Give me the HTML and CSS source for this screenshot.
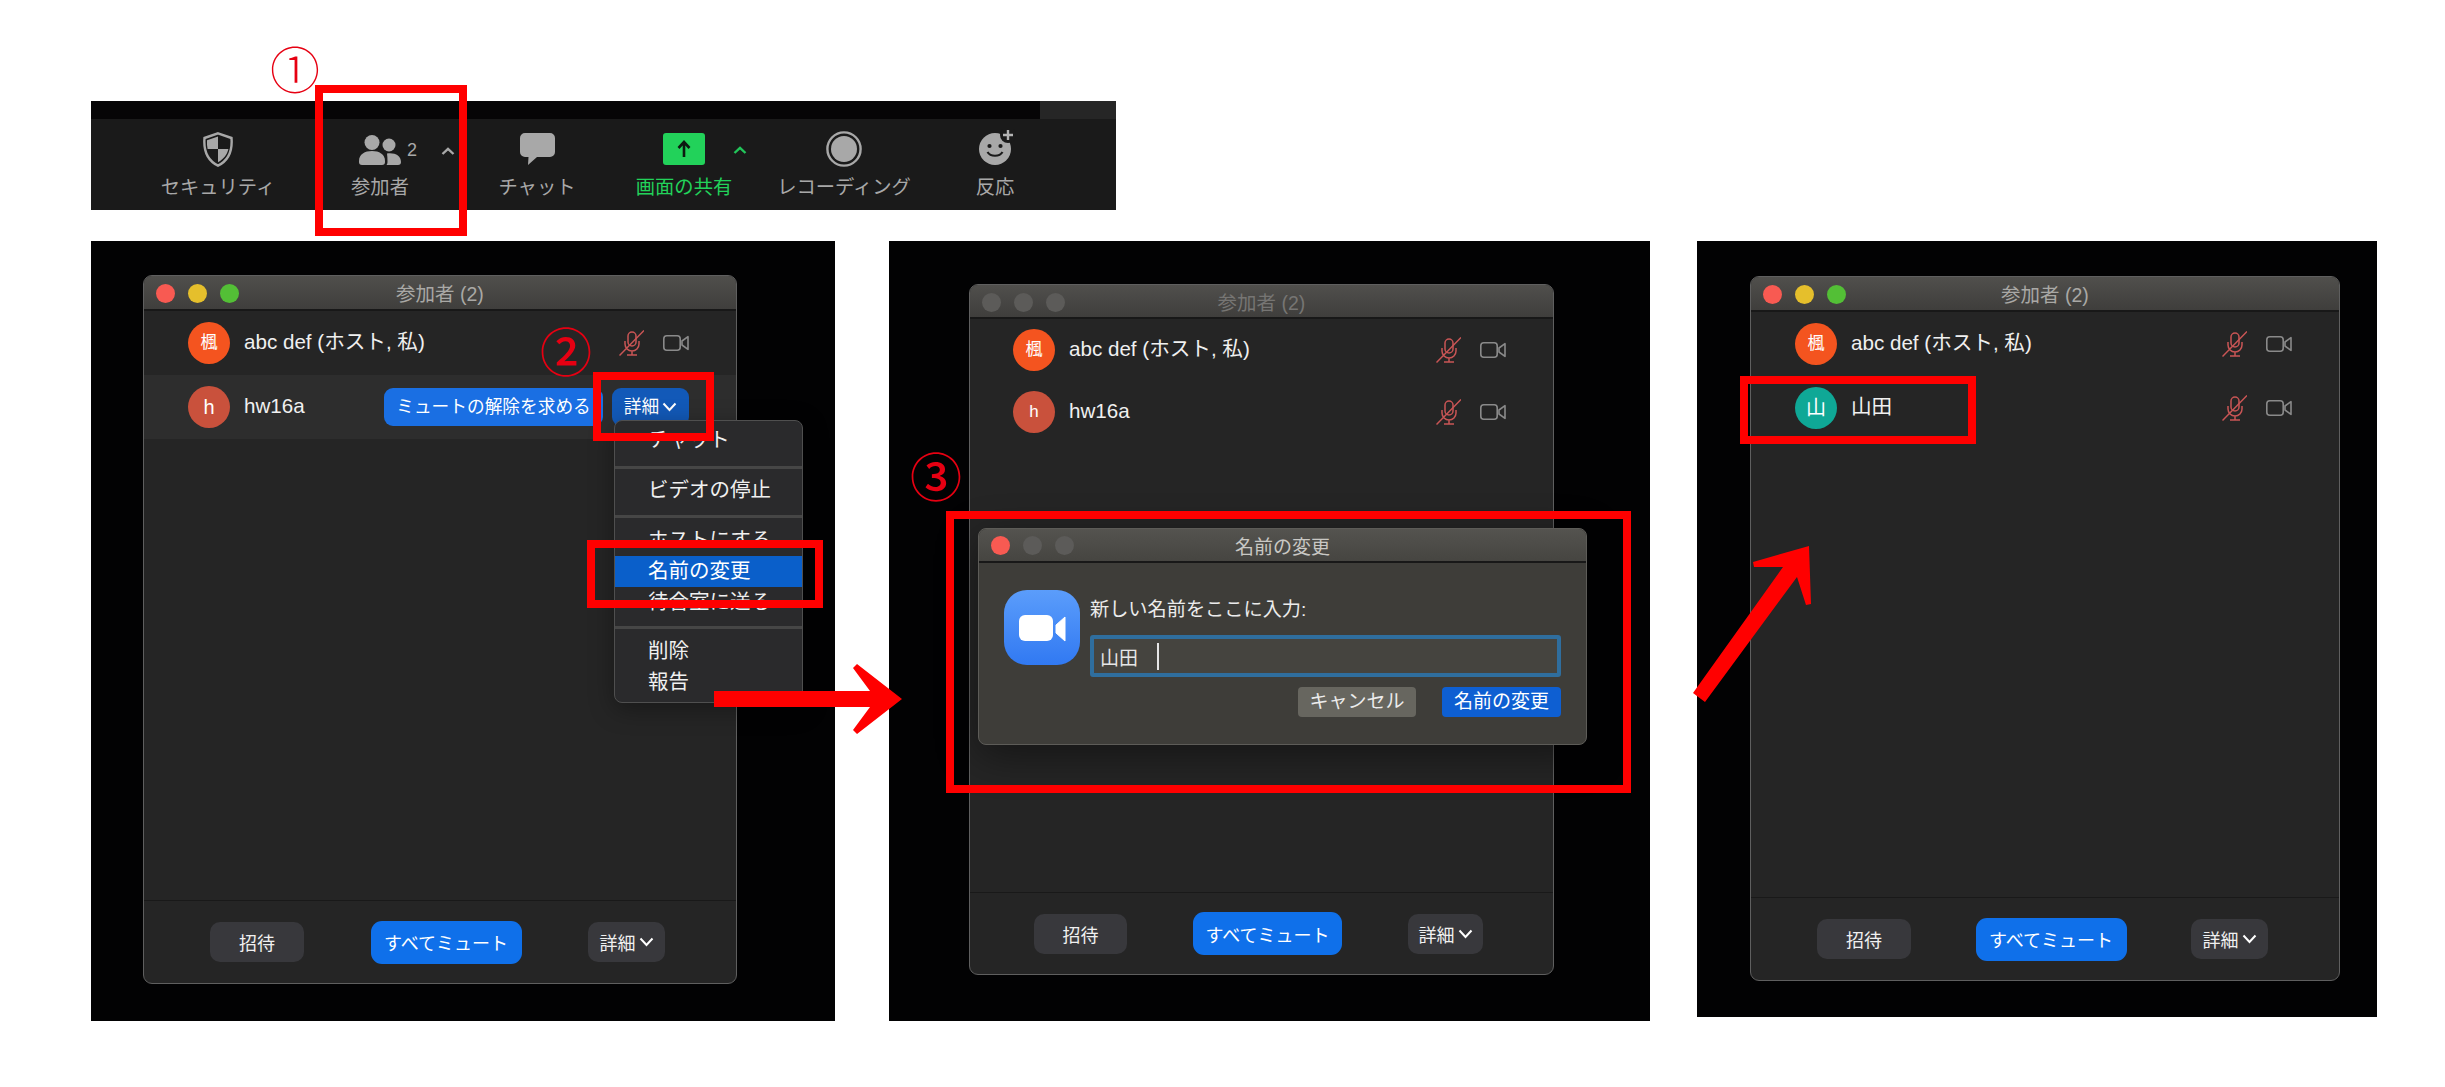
FILE: index.html
```html
<!DOCTYPE html>
<html lang="ja">
<head>
    <meta charset="UTF-8">
    <meta name="viewport" content="width=device-width, initial-scale=1.0">
    <title>名前の変更手順</title>
    <link rel="stylesheet" href="styles.css">
</head>
<body>
    <svg class="icon-defs" aria-hidden="true">
        <symbol id="mic-off" viewBox="0 0 25 26">
            <rect x="9" y="2" width="8" height="14" rx="4" fill="none" stroke="currentColor" stroke-width="1.5"/>
            <path d="M6 11v3a7 7 0 0 0 14 0v-3M13 21v4M8 25h10M.5 25.5 25 .5" fill="none" stroke="currentColor" stroke-width="1.5"/>
        </symbol>
        <symbol id="camera" viewBox="0 0 26 16">
            <rect x=".8" y=".8" width="16.4" height="14.4" rx="3" fill="none" stroke="currentColor" stroke-width="1.6"/>
            <path d="M19 6 25 1.6v12.8L19 10z" fill="none" stroke="currentColor" stroke-width="1.6" stroke-linejoin="round"/>
        </symbol>
        <symbol id="chevron" viewBox="0 0 15 10">
            <path d="M1.5 1.5 7.5 8l6-6.5" fill="none" stroke="currentColor" stroke-width="2"/>
        </symbol>
        <symbol id="caret" viewBox="0 0 14 8">
            <path d="M1.5 7 7 1.8 12.5 7" fill="none" stroke="currentColor" stroke-width="2.4"/>
        </symbol>
    </svg>

    <header class="toolbar">
        <div class="toolbar-strip"><div class="strip-patch"></div></div>
        <div class="toolbar-items">
            <div class="tool tool-security">
                <svg class="tool-icon" width="32" height="35" viewBox="0 0 32 35">
                    <path d="M16 1.3 29.500 6c1 12-2 22-13.500 27.700C4.500 28 1.500 18 2.500 6z" fill="none" stroke="#a8a8a8" stroke-width="2.4"/>
                    <path d="M16 4.500 5 8.200c-.2 3 0 6 .6 8.800H16zM16 17h10.400c-1.300 5.500-4.500 10-10.400 13.200z" fill="#a8a8a8"/>
                </svg>
                <span class="tool-label">セキュリティ</span>
            </div>
            <div class="tool tool-people">
                <svg class="tool-icon" width="42" height="30" viewBox="0 0 42 30">
                    <circle cx="13" cy="7.5" r="7.5" fill="#a8a8a8"/>
                    <circle cx="30" cy="10" r="6.5" fill="#a8a8a8"/>
                    <path d="M0 26c0-7 6-10 13-10s13 3 13 10v1a3 3 0 0 1-3 3H3a3 3 0 0 1-3-3z" fill="#a8a8a8"/>
                    <path d="M28 18.500c8-1 14 2 14 8.500a3 3 0 0 1-3 3H27.500c.8-.8 1-2 1-3.500 0-3-.2-5.500-.5-8z" fill="#a8a8a8"/>
                </svg>
                <span class="tool-count">2</span>
                <svg class="tool-caret caret-people"><use href="#caret"/></svg>
                <span class="tool-label">参加者</span>
            </div>
            <div class="tool tool-chat">
                <svg class="tool-icon" width="35" height="32" viewBox="0 0 35 32">
                    <path d="M5 0h25a5 5 0 0 1 5 5v14a5 5 0 0 1-5 5H17l-9 8 .5-8H5a5 5 0 0 1-5-5V5a5 5 0 0 1 5-5z" fill="#a8a8a8"/>
                </svg>
                <span class="tool-label">チャット</span>
            </div>
            <div class="tool tool-share">
                <svg class="tool-icon" width="42" height="32" viewBox="0 0 42 32">
                    <rect width="42" height="32" rx="3" fill="#22d25a"/>
                    <path d="M21 24V10M15.500 15 21 9l5.500 6" fill="none" stroke="#0d1a10" stroke-width="2.6"/>
                </svg>
                <svg class="tool-caret caret-share"><use href="#caret"/></svg>
                <span class="tool-label label-green">画面の共有</span>
            </div>
            <div class="tool tool-record">
                <svg class="tool-icon" width="36" height="36" viewBox="0 0 36 36">
                    <circle cx="18" cy="18" r="16.6" fill="none" stroke="#a8a8a8" stroke-width="2.4"/>
                    <circle cx="18" cy="18" r="13" fill="#a8a8a8"/>
                </svg>
                <span class="tool-label">レコーディング</span>
            </div>
            <div class="tool tool-reaction">
                <svg class="tool-icon icon-reaction" width="44" height="36" viewBox="0 0 44 36">
                    <circle cx="22" cy="20" r="16" fill="#a8a8a8"/>
                    <circle cx="35" cy="6" r="8" fill="#1a1a1a"/>
                    <path d="M35 1v10M30 6h10" stroke="#b4b4b4" stroke-width="2.4"/>
                    <circle cx="16.500" cy="17" r="2.1" fill="#1a1a1a"/>
                    <circle cx="27.500" cy="17" r="2.1" fill="#1a1a1a"/>
                    <path d="M14.500 23c3 5 12 5 15 0" fill="none" stroke="#1a1a1a" stroke-width="2.2"/>
                </svg>
                <span class="tool-label">反応</span>
            </div>
        </div>
    </header>

    <main class="panels">
        <section class="panel panel-a">
            <div class="win win-a">
                <div class="titlebar">
                    <div class="dots"><i class="dot red"></i><i class="dot yellow"></i><i class="dot green"></i></div>
                    <span class="win-title">参加者 (2)</span>
                </div>
                <div class="rows">
                    <div class="row">
                        <span class="avatar av-orange">楓</span>
                        <span class="name">abc def (ホスト, 私)</span>
                        <span class="row-icons">
                            <svg class="mic"><use href="#mic-off"/></svg>
                            <svg class="cam"><use href="#camera"/></svg>
                        </span>
                    </div>
                    <div class="row row-hover">
                        <span class="avatar av-brick">h</span>
                        <span class="name">hw16a</span>
                        <span class="row-actions">
                            <span class="btn-ask">ミュートの解除を求める</span>
                            <span class="btn-more">詳細<svg class="chev"><use href="#chevron"/></svg></span>
                        </span>
                    </div>
                </div>
                <div class="win-foot">
                    <span class="foot-btn foot-invite">招待</span>
                    <span class="foot-btn foot-mute">すべてミュート</span>
                    <span class="foot-btn foot-more">詳細<svg class="chev"><use href="#chevron"/></svg></span>
                </div>
                <div class="menu">
                    <div class="menu-item">チャット</div>
                    <div class="menu-sep sep-one"></div>
                    <div class="menu-item">ビデオの停止</div>
                    <div class="menu-sep sep-two"></div>
                    <div class="menu-item">ホストにする</div>
                    <div class="menu-item menu-active">名前の変更</div>
                    <div class="menu-item">待合室に送る</div>
                    <div class="menu-sep sep-three"></div>
                    <div class="menu-item">削除</div>
                    <div class="menu-item">報告</div>
                </div>
            </div>
        </section>

        <section class="panel panel-b">
            <div class="win win-b">
                <div class="titlebar">
                    <div class="dots"><i class="dot grey"></i><i class="dot grey"></i><i class="dot grey"></i></div>
                    <span class="win-title">参加者 (2)</span>
                </div>
                <div class="rows">
                    <div class="row">
                        <span class="avatar av-orange">楓</span>
                        <span class="name">abc def (ホスト, 私)</span>
                        <span class="row-icons">
                            <svg class="mic"><use href="#mic-off"/></svg>
                            <svg class="cam"><use href="#camera"/></svg>
                        </span>
                    </div>
                    <div class="row">
                        <span class="avatar av-brick">h</span>
                        <span class="name">hw16a</span>
                        <span class="row-icons">
                            <svg class="mic"><use href="#mic-off"/></svg>
                            <svg class="cam"><use href="#camera"/></svg>
                        </span>
                    </div>
                </div>
                <div class="win-foot">
                    <span class="foot-btn foot-invite">招待</span>
                    <span class="foot-btn foot-mute">すべてミュート</span>
                    <span class="foot-btn foot-more">詳細<svg class="chev"><use href="#chevron"/></svg></span>
                </div>
                <div class="dialog">
                    <div class="titlebar dialog-bar">
                        <div class="dots"><i class="dot red"></i><i class="dot grey"></i><i class="dot grey"></i></div>
                        <span class="win-title">名前の変更</span>
                    </div>
                    <div class="dialog-body">
                        <svg class="zoom-logo" width="76" height="75" viewBox="0 0 76 75">
                            <defs>
                                <linearGradient id="zoom-blue" x1="0" y1="0" x2="0" y2="1">
                                    <stop offset="0" stop-color="#5b9dfb"/>
                                    <stop offset="1" stop-color="#3179f2"/>
                                </linearGradient>
                            </defs>
                            <rect width="76" height="75" rx="23" fill="url(#zoom-blue)"/>
                            <rect x="15" y="25" width="34" height="26" rx="6" fill="#fff"/>
                            <path d="M52 35l9-8v24l-9-8z" fill="#fff" stroke="#fff" stroke-linejoin="round"/>
                        </svg>
                        <div class="dialog-form">
                            <div class="dialog-label">新しい名前をここに入力:</div>
                            <div class="name-input"><span>山田</span><i class="caret-bar"></i></div>
                            <div class="dialog-btns">
                                <span class="dlg-btn dlg-cancel">キャンセル</span>
                                <span class="dlg-btn dlg-ok">名前の変更</span>
                            </div>
                        </div>
                    </div>
                </div>
            </div>
        </section>

        <section class="panel panel-c">
            <div class="win win-c">
                <div class="titlebar">
                    <div class="dots"><i class="dot red"></i><i class="dot yellow"></i><i class="dot green"></i></div>
                    <span class="win-title">参加者 (2)</span>
                </div>
                <div class="rows">
                    <div class="row">
                        <span class="avatar av-orange">楓</span>
                        <span class="name">abc def (ホスト, 私)</span>
                        <span class="row-icons">
                            <svg class="mic"><use href="#mic-off"/></svg>
                            <svg class="cam"><use href="#camera"/></svg>
                        </span>
                    </div>
                    <div class="row">
                        <span class="avatar av-teal">山</span>
                        <span class="name">山田</span>
                        <span class="row-icons">
                            <svg class="mic"><use href="#mic-off"/></svg>
                            <svg class="cam"><use href="#camera"/></svg>
                        </span>
                    </div>
                </div>
                <div class="win-foot">
                    <span class="foot-btn foot-invite">招待</span>
                    <span class="foot-btn foot-mute">すべてミュート</span>
                    <span class="foot-btn foot-more">詳細<svg class="chev"><use href="#chevron"/></svg></span>
                </div>
            </div>
        </section>
    </main>

    <!-- red annotations drawn on top of the screenshots -->
    <div class="box box-people"></div>
    <div class="box box-more"></div>
    <div class="box box-rename"></div>
    <div class="box box-dialog"></div>
    <div class="box box-result"></div>
    <span class="num num-one">①</span>
    <span class="num num-two">②</span>
    <span class="num num-three">③</span>
    <svg class="arrows" width="2445" height="1087" viewBox="0 0 2445 1087">
        <polygon points="714,691 870,691 853,668 857,664 902,699 857,734 853,730 870,707 714,707" fill="#f00"/>
        <polygon points="1693,693 1783,567 1754,567 1753,562 1809,546 1811,604 1806,605 1797,577 1705,702" fill="#f00"/>
    </svg>
</body>
</html>
```

FILE: styles.css
```css
* {
    box-sizing: border-box;
}
html, body {
    height: 1087px;
    overflow: hidden;
}
body {
    margin: 0;
    position: relative;
    background-color: #ffffff;
    font-family: "Liberation Sans", "Noto Sans CJK JP", sans-serif;
    color: #e8e8e8;
}
.icon-defs {
    position: absolute;
    width: 0;
    height: 0;
}

/* toolbar */
.toolbar {
    margin: 101px 0 0 91px;
    width: 1025px;
    height: 109px;
    background-color: #1a1a1a;
}
.toolbar-strip {
    height: 18px;
    background-color: #060506;
    display: flex;
    justify-content: flex-end;
}
.strip-patch {
    width: 76px;
    background-color: #262626;
}
.toolbar-items {
    display: flex;
    padding-left: 49px;
    height: 91px;
}
.tool {
    position: relative;
    display: flex;
    flex-direction: column;
    align-items: center;
}
.tool-security { width: 156px; }
.tool-people { width: 168px; }
.tool-chat { width: 146px; }
.tool-share { width: 148px; }
.tool-record { width: 172px; }
.tool-reaction { width: 130px; }
.tool-icon {
    position: absolute;
    top: 14px;
}
.tool-security .tool-icon { top: 13px; }
.tool-people .tool-icon { top: 16px; }
.tool-record .tool-icon { top: 12px; }
.tool-reaction .tool-icon { top: 10px; left: 43px; }
.tool-label {
    position: absolute;
    top: 56px;
    line-height: 26px;
    font-size: 19.3px;
    color: #a8a8a8;
    white-space: nowrap;
}
.label-green {
    color: #22d25a;
}
.tool-count {
    position: absolute;
    left: 111px;
    top: 19px;
    font-size: 18px;
    line-height: 24px;
    color: #a8a8a8;
}
.tool-caret {
    position: absolute;
    width: 14px;
    height: 8px;
}
.caret-people {
    left: 145px;
    top: 28px;
    color: #a8a8a8;
}
.caret-share {
    left: 123px;
    top: 27px;
    color: #22c55a;
}

/* black screenshots */
.panels {
    display: flex;
    margin: 31px 0 0 91px;
}
.panel {
    height: 780px;
    background-color: #020203;
}
.panel-a {
    width: 744px;
    padding: 34px 0 0 52px;
}
.panel-b {
    width: 761px;
    margin-left: 54px;
    padding: 43px 0 0 80px;
}
.panel-c {
    width: 680px;
    height: 776px;
    margin-left: 47px;
    padding: 35px 0 0 53px;
}

/* participants window */
.win {
    position: relative;
    display: flex;
    flex-direction: column;
    background-color: #252525;
    border: 1px solid #5f5f5f;
    border-radius: 9px;
}
.win-a { width: 594px; height: 709px; }
.win-b { width: 585px; height: 691px; }
.win-c { width: 590px; height: 705px; }
.titlebar {
    position: relative;
    flex: none;
    height: 35px;
    display: flex;
    align-items: center;
    justify-content: center;
    background: linear-gradient(#504f4c, #3f3e3c);
    border-bottom: 2px solid #181818;
    border-radius: 8px 8px 0 0;
}
.win-b > .titlebar {
    height: 34px;
}
.dots {
    position: absolute;
    left: 12px;
    top: 8px;
    display: flex;
    gap: 13px;
}
.dot {
    width: 19px;
    height: 19px;
    border-radius: 50%;
}
.dot.red { background-color: #f85a52; }
.dot.yellow { background-color: #e5bf2c; }
.dot.green { background-color: #53bf36; }
.dot.grey { background-color: #5c5b59; }
.win-title {
    font-size: 19.5px;
    color: #a9a8a5;
}
.win-b > .titlebar .win-title {
    color: #767573;
}
.rows {
    flex: 1;
}
.row {
    display: flex;
    align-items: center;
    height: 64px;
    padding: 0 47px 0 44px;
}
.win-b .row {
    height: 62px;
    padding-left: 43px;
}
.row-hover {
    background-color: #2d2d2d;
}
.avatar {
    flex: none;
    width: 42px;
    height: 42px;
    margin-right: 14px;
    border-radius: 50%;
    color: #ffffff;
    font-size: 17px;
    line-height: 42px;
    text-align: center;
}
.row-hover .avatar {
    font-size: 20px;
}
.av-orange { background-color: #f4541f; }
.av-brick { background-color: #c9513c; }
.av-teal { background-color: #0fa896; font-size: 20px; }
.name {
    height: 24px;
    margin-bottom: 2px;
    font-size: 20.6px;
    line-height: 24px;
    color: #f0f0f0;
    white-space: nowrap;
}
.row-icons {
    display: flex;
    align-items: center;
    gap: 19px;
    margin-left: auto;
}
.mic {
    width: 25px;
    height: 26px;
    color: #c95555;
}
.cam {
    width: 26px;
    height: 16px;
    color: #8a8a8a;
}
.row-actions {
    display: flex;
    gap: 9px;
    margin-left: auto;
}
.btn-ask, .btn-more {
    height: 38px;
    border-radius: 9px;
    background-color: #1a6fe3;
    color: #ffffff;
    font-size: 17.7px;
    line-height: 38px;
    text-align: center;
}
.btn-ask {
    width: 219px;
}
.btn-more {
    width: 77px;
    display: flex;
    align-items: center;
    justify-content: center;
    gap: 3px;
    background-color: #1259b8;
}
.chev {
    width: 15px;
    height: 10px;
    color: #ffffff;
}
.win-foot {
    flex: none;
    height: 83px;
    display: flex;
    align-items: center;
    justify-content: space-between;
    padding: 0 71px 0 66px;
    border-top: 1px solid #191919;
}
.win-b .win-foot {
    height: 82px;
    padding: 0 70px 0 64px;
}
.foot-btn {
    height: 40px;
    display: flex;
    align-items: center;
    justify-content: center;
    gap: 3px;
    border-radius: 10px;
    background-color: #38383c;
    color: #f0f0f0;
    font-size: 18px;
}
.foot-invite { width: 94px; }
.foot-mute {
    width: 151px;
    height: 43px;
    border-radius: 11px;
    background-color: #0f70ea;
    color: #ffffff;
}
.foot-more { width: 77px; }
.win-b .foot-invite { width: 93px; }
.win-b .foot-mute { width: 149px; }
.win-b .foot-more { width: 75px; }

/* dropdown over the window */
.menu {
    position: absolute;
    left: 470px;
    top: 144px;
    width: 189px;
    height: 283px;
    padding-top: 4px;
    background-color: #2a2a2c;
    border: 1px solid #4f4f4f;
    border-radius: 8px;
    box-shadow: 0 6px 24px rgba(0, 0, 0, 0.35);
}
.menu-item {
    height: 31px;
    padding-left: 33px;
    font-size: 20.5px;
    line-height: 30px;
    color: #f0f0f0;
    white-space: nowrap;
}
.menu-active {
    background-color: #0a5fca;
    color: #ffffff;
}
.menu-sep {
    height: 3px;
    background-color: #464646;
}
.sep-one { margin: 10px 0 6px; }
.sep-two { margin: 9px 0 7px; }
.sep-three { margin: 8px 0 7px; }

/* rename dialog */
.dialog {
    position: absolute;
    left: 8px;
    top: 243px;
    width: 609px;
    height: 217px;
    background-color: #3e3d39;
    border: 1px solid #5d5c58;
    border-radius: 8px;
    box-shadow: 0 10px 40px rgba(0, 0, 0, 0.45);
}
.dialog-bar {
    height: 34px;
    background: linear-gradient(#54534f, #464541);
}
.dialog .dots {
    left: 12px;
    top: 7px;
}
.dialog-bar .win-title {
    color: #c9c8c4;
    font-size: 19px;
}
.dialog-body {
    display: flex;
    align-items: flex-start;
    gap: 10px;
    padding: 27px 0 0 25px;
}
.zoom-logo {
    flex: none;
}
.dialog-form {
    width: 471px;
    margin-top: 5px;
}
.dialog-label {
    height: 30px;
    font-size: 19.2px;
    line-height: 30px;
    color: #ececec;
}
.name-input {
    display: flex;
    align-items: center;
    height: 42px;
    margin-top: 10px;
    padding-left: 6px;
    background-color: #45443f;
    border: 4px solid #2f6e9e;
    border-radius: 3px;
    font-size: 19px;
    color: #e6e6e6;
}
.caret-bar {
    width: 2px;
    height: 27px;
    margin-left: 19px;
    background-color: #e6e6e6;
}
.dialog-btns {
    display: flex;
    justify-content: flex-end;
    gap: 26px;
    margin-top: 10px;
}
.dlg-btn {
    width: 119px;
    height: 30px;
    border-radius: 4px;
    font-size: 19px;
    line-height: 30px;
    text-align: center;
    color: #ffffff;
}
.dlg-cancel {
    width: 118px;
    background-color: #67665f;
    color: #ececec;
}
.dlg-ok {
    background-color: #0e5fd2;
}

/* annotations */
.box {
    position: absolute;
    border: 8px solid #ff0000;
}
.box-people {
    left: 315px;
    top: 85px;
    width: 152px;
    height: 151px;
}
.box-more {
    left: 593px;
    top: 372px;
    width: 121px;
    height: 69px;
}
.box-rename {
    left: 587px;
    top: 540px;
    width: 236px;
    height: 68px;
}
.box-dialog {
    left: 946px;
    top: 511px;
    width: 685px;
    height: 282px;
}
.box-result {
    left: 1740px;
    top: 376px;
    width: 236px;
    height: 68px;
}
.num {
    position: absolute;
    font-family: "Noto Sans CJK JP", sans-serif;
    color: #e60012;
    line-height: 1;
}
.num-one {
    left: 270px;
    top: 42px;
    font-size: 50px;
    font-weight: 300;
}
.num-two {
    left: 540px;
    top: 324px;
    font-size: 52px;
    font-weight: 500;
}
.num-three {
    left: 910px;
    top: 449px;
    font-size: 52px;
    font-weight: 500;
}
.arrows {
    position: absolute;
    left: 0;
    top: 0;
    pointer-events: none;
}
```
